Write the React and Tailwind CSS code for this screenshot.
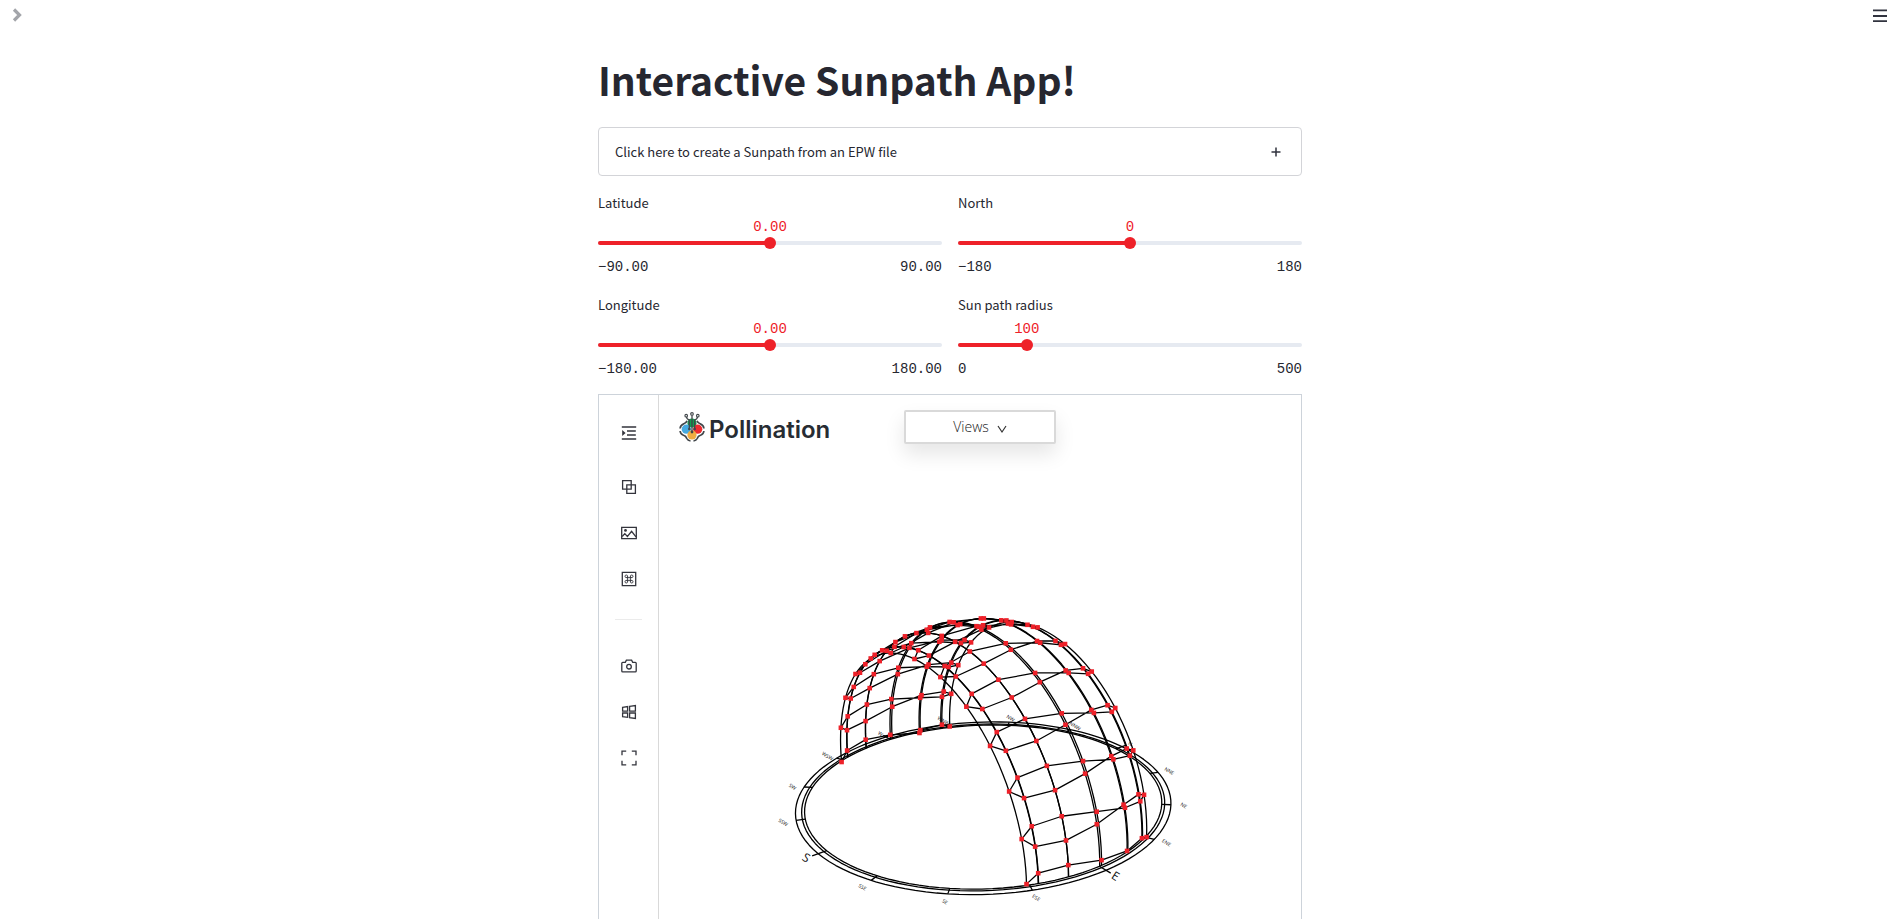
import React, { useState } from "react";

const RAD = Math.PI / 180;

// Solar declination (degrees) and equation of time (minutes) on the 21st of each month.
const MONTHS = [
  [-20.0, -11.2], [-10.7, -13.7], [0.1, -7.3], [11.8, 1.3], [20.1, 3.4], [23.4, -1.8],
  [20.5, -6.4], [12.2, -3.1], [0.8, 6.9], [-10.7, 15.4], [-19.9, 14.1], [-23.4, 1.9],
];
const HOURS = [7, 8, 9, 10, 11, 12, 13, 14, 15, 16, 17];
const CALENDAR = [0, 1, 2, 3, 4, 5, 6, 7, 8, 9, 10, 11];
const SUNRISE = [11, 10, 9, 8, 3, 4, 5];
const SUNSET = [11, 0, 1, 2, 3, 7, 6, 5];

// Perspective camera, as the first eleven entries of a 3x4 projection matrix.
const CAMERA = [
  1.02962, 1.44144, -0.05174, 0.03413,
  0.58514, -0.47794, -1.59619, 0.36277,
  -0.11429, 0.08032, -0.06268,
];

function project([x, y, z]) {
  const c = CAMERA;
  const w = c[8] * x + c[9] * y + c[10] * z + 1;
  return [
    980 + (100 * (c[0] * x + c[1] * y + c[2] * z + c[3])) / w,
    760 + (100 * (c[4] * x + c[5] * y + c[6] * z + c[7])) / w,
  ];
}

function direction(declination, hourAngle) {
  const c = Math.cos(declination * RAD);
  const h = hourAngle * RAD;
  return [-c * Math.sin(h), Math.sin(declination * RAD), c * Math.cos(h)];
}

const sunAt = (month, hour) =>
  project(direction(MONTHS[month][0], (hour - 12 + MONTHS[month][1] / 60) * 15));

const onGround = (azimuth, radius) =>
  project([radius * Math.sin(azimuth * RAD), radius * Math.cos(azimuth * RAD), 0]);

const toPoints = (list) => list.map(([x, y]) => `${x.toFixed(2)},${y.toFixed(2)}`).join(" ");

const COMPASS = ["N", "NNE", "NE", "ENE", "E", "ESE", "SE", "SSE", "S", "SSW", "SW", "WSW", "W", "WNW", "NW", "NNW"];

function Sunpath() {
  const arcs = MONTHS.map(([d]) =>
    toPoints(Array.from({ length: 61 }, (_, i) => project(direction(d, -90 + i * 3))))
  );
  const loops = HOURS.map((h) => toPoints(CALENDAR.map((m) => sunAt(m, h))));
  const suns = [
    ...HOURS.flatMap((h) => CALENDAR.map((m) => sunAt(m, h))),
    ...SUNRISE.map((m) => sunAt(m, 6)),
    ...SUNSET.map((m) => sunAt(m, 18)),
  ];
  return (
    <svg viewBox="659 395 643 524" className="absolute inset-x-0 top-0 w-full" role="img" aria-label="Sunpath diagram">
      <g fill="none" stroke="#000" strokeWidth="1.3" strokeLinejoin="round">
        {[1, 1.016, 1.05].map((r) => (
          <polygon key={r} points={toPoints(Array.from({ length: 120 }, (_, i) => onGround(i * 3, r)))} />
        ))}
        {COMPASS.map((name, i) => (
          <polyline key={name} points={toPoints([onGround(i * 22.5, 1), onGround(i * 22.5, i % 4 ? 1.05 : 1.085)])} />
        ))}
        {arcs.map((p, i) => <polyline key={i} points={p} />)}
        {loops.map((p, i) => <polygon key={i} points={p} />)}
        <polyline points={toPoints(SUNRISE.map((m) => sunAt(m, 6)))} />
        <polyline points={toPoints(SUNSET.map((m) => sunAt(m, 18)))} />
      </g>
      <g fill="#ee2129">
        {suns.map(([x, y], i) => (
          <rect key={i} x={x - 2.3} y={y - 2.3} width="4.6" height="4.6" />
        ))}
      </g>
      <g fill="#111" textAnchor="middle" fontFamily="'Open Sans', sans-serif">
        {COMPASS.map((name, i) => {
          const [x, y] = onGround(i * 22.5, 1.12);
          const major = name === "S" || name === "E";
          return (
            <text key={name} transform={`translate(${x.toFixed(1)} ${y.toFixed(1)}) rotate(32)`} dy={major ? 4 : 2} fontSize={major ? 12 : 5}>
              {name}
            </text>
          );
        })}
      </g>
    </svg>
  );
}

function Slider({ id, label, min, max, initial, digits = 0 }) {
  const [value, setValue] = useState(initial);
  const pct = ((value - min) / (max - min)) * 100;
  return (
    <div>
      <label htmlFor={id} className="block h-5 text-[13px] leading-5">{label}</label>
      <div className="relative mt-1 h-5 font-['Liberation_Mono',monospace] text-sm leading-5 text-[#ee2129]">
        <output htmlFor={id} className="absolute -translate-x-1/2" style={{ left: `${pct}%` }}>{value.toFixed(digits)}</output>
      </div>
      <div className="relative flex h-3 items-center">
        <div className="h-1 w-full overflow-hidden rounded-full bg-[#e6eaf1]">
          <div className="h-full bg-[#ee2129]" style={{ width: `${pct}%` }} />
        </div>
        <input
          id={id}
          type="range"
          min={min}
          max={max}
          step={digits ? 0.01 : 1}
          value={value}
          onChange={(e) => setValue(Number(e.target.value))}
          className="absolute -inset-x-1.5 h-3 w-[calc(100%+12px)] cursor-pointer appearance-none bg-transparent outline-none [&::-webkit-slider-thumb]:size-3 [&::-webkit-slider-thumb]:appearance-none [&::-webkit-slider-thumb]:rounded-full [&::-webkit-slider-thumb]:bg-[#ee2129]"
        />
      </div>
      <div className="mt-2 flex h-5 justify-between font-['Liberation_Mono',monospace] text-sm leading-5">
        <span>{min.toFixed(digits).replace("-", "−")}</span>
        <span>{max.toFixed(digits)}</span>
      </div>
    </div>
  );
}

function Icon({ children }) {
  return (
    <svg viewBox="0 0 16 16" className="size-4" fill="none" stroke="#33343c" strokeWidth="1.3" aria-hidden="true">
      {children}
    </svg>
  );
}

function Tool({ label, children }) {
  return (
    <button type="button" aria-label={label} className="flex h-[46px] w-full shrink-0 cursor-pointer items-center justify-center">
      <Icon>{children}</Icon>
    </button>
  );
}

function Sidebar() {
  return (
    <nav aria-label="Viewer tools" className="flex w-[60px] shrink-0 flex-col items-center border-r border-[#d9d9d9] pt-[15px]">
      <Tool label="Expand panel">
        <path d="M.8 2H15.200M.8 14H15.200" />
        <path d="M6 6H14.800M6 10H14.800" />
        <path d="M1.200 5V11L4.600 8Z" fill="#33343c" stroke="none" />
      </Tool>
      <div className="mt-2 w-full">
        <Tool label="Layers">
          <path d="M1.600 1.600H10.200V10.200H1.600ZM5.800 5.800H14.400V14.400H5.800Z" />
        </Tool>
      </div>
      <Tool label="Background image">
        <path d="M.7 2.300H15.300V13.700H.7Z" />
        <path d="M1.200 11.500L3.800 8.600L6.400 11.500L10.600 6.300L15 11.800" />
        <circle cx="4.500" cy="5.400" r="1.400" fill="#33343c" stroke="none" />
      </Tool>
      <Tool label="Shortcuts">
        <path d="M1.300 1.300H14.700V14.700H1.300Z" />
        <g strokeWidth="0.900">
          <path d="M6.600 5.300V10.700M9.400 5.300V10.700M5.300 6.600H10.700M5.300 9.400H10.700" />
          <circle cx="5.300" cy="5.300" r="1.300" />
          <circle cx="10.700" cy="5.300" r="1.300" />
          <circle cx="5.300" cy="10.700" r="1.300" />
          <circle cx="10.700" cy="10.700" r="1.300" />
        </g>
      </Tool>
      <hr className="mt-[17px] mb-[23px] w-[27px] border-t border-[#ebebeb]" />
      <Tool label="Take snapshot">
        <path d="M1.700 4.300H4.300L5.400 2.100H10.600L11.700 4.300H14.300Q15.200 4.300 15.200 5.200V13Q15.200 13.900 14.300 13.900H1.700Q.8 13.900 .8 13V5.200Q.8 4.300 1.700 4.300Z" />
        <circle cx="8" cy="8.700" r="2.300" />
      </Tool>
      <Tool label="Split views">
        <path d="M1.600 3.300L6.600 2.600V7.200H1.600ZM8.600 2.300L14.400 1.500V7.200H8.600ZM1.600 9H6.600V13.300L1.600 12.700ZM8.600 9H14.400V14.500L8.600 13.600Z" />
      </Tool>
      <Tool label="Fullscreen">
        <path d="M1 5.200V1.200H5.200M10.800 1.200H15V5.200M15 10.800V14.800H10.800M5.200 14.800H1V10.800" />
      </Tool>
    </nav>
  );
}

function Logo() {
  return (
    <div className="flex items-start gap-1 text-[#272c33]">
      <svg viewBox="0 0 26 30" className="h-[30px] w-[26px]" fill="none" stroke="#41464a" aria-hidden="true">
        <circle cx="13" cy="11" r="4.600" fill="#0f9d4f" stroke="none" />
        <circle cx="7.300" cy="17.200" r="4.600" fill="#45a9e0" stroke="none" />
        <circle cx="18.700" cy="17.200" r="4.600" fill="#ee2b2f" stroke="none" />
        <circle cx="13" cy="23" r="4.600" fill="#f0ad42" stroke="none" />
        <path strokeWidth="1.700" d="M8 8.800Q7.300 11 4.800 11.800Q1.200 13.500 1.100 16.500M1.100 19Q1.500 22.300 4.500 23.300Q7 24 7.800 26.500Q8.800 28.600 11.500 29M18 8.800Q18.700 11 21.200 11.800Q24.800 13.500 24.900 16.500M24.900 19Q24.500 22.300 21.500 23.300Q19 24 18.200 26.500Q17.200 28.600 14.500 29" />
        <path strokeWidth="1.300" d="M13 3.200V19.500M7.500 4.800Q7.800 7.500 10.300 7.800V16M18.500 4.800Q18.200 7.500 15.700 7.800V16" />
        <g fill="#fff" strokeWidth="1.100">
          <circle cx="13" cy="1.900" r="1.300" />
          <circle cx="7.200" cy="3.700" r="1.300" />
          <circle cx="18.800" cy="3.700" r="1.300" />
        </g>
        <g fill="#41464a" stroke="none">
          <circle cx="10.300" cy="17" r="1.300" />
          <circle cx="15.700" cy="17" r="1.300" />
          <circle cx="13" cy="20" r="1.400" />
        </g>
      </svg>
      <span className="font-['Inter',sans-serif] text-2xl leading-9 font-semibold">Pollination</span>
    </div>
  );
}

function Viewer() {
  return (
    <section aria-label="Model viewer" className="mt-[15px] flex min-h-0 flex-1 border border-b-0 border-[#cdd3da]">
      <Sidebar />
      <div className="relative min-w-0 flex-1 overflow-hidden">
        <Sunpath />
        <div className="relative grid grid-cols-[1fr_auto_1fr] items-start px-5 pt-[15px]">
          <div className="pt-0.5"><Logo /></div>
          <button type="button" className="flex h-[34px] w-[152px] cursor-pointer items-center justify-center gap-2 rounded-xs border-2 border-[#d9d9d9] bg-white font-['Open_Sans',sans-serif] text-sm font-light text-[#222] shadow-[0_10px_20px_rgba(0,0,0,0.10)]">
            Views
            <svg viewBox="0 0 10 10" className="mt-1 size-2.5" fill="none" stroke="#333" strokeWidth="1.200" aria-hidden="true">
              <path d="M1 2L5 8L9 2" />
            </svg>
          </button>
        </div>
      </div>
    </section>
  );
}

export default function App() {
  return (
    <div className="flex h-screen flex-col overflow-hidden bg-white font-['Noto_Sans_CJK_SC',sans-serif] text-[#262730]">
      <header className="flex h-[50px] shrink-0 items-start justify-between py-2 pr-2 pl-3">
        <button type="button" aria-label="Open sidebar" className="cursor-pointer">
          <svg viewBox="0 0 10 14" className="h-3.5 w-2.5" fill="none" stroke="#a3a5aa" strokeWidth="3.200" aria-hidden="true">
            <path d="M2 1.500L7.500 7L2 12.500" />
          </svg>
        </button>
        <button type="button" aria-label="Main menu" className="cursor-pointer">
          <svg viewBox="0 0 16 16" className="size-4" fill="none" stroke="#31333f" strokeWidth="1.800" aria-hidden="true">
            <path d="M2 2.300H16M2 8H16M2 13.200H16" />
          </svg>
        </button>
      </header>
      <main className="flex min-h-0 flex-1 justify-center pl-[5px]">
        <div className="flex w-full max-w-[704px] flex-col">
          <h1 className="text-[39px] leading-[58px] font-bold">Interactive Sunpath App!</h1>
          <button type="button" aria-expanded="false" className="mt-[19px] flex h-[49px] shrink-0 cursor-pointer items-center justify-between rounded border border-[#d3d4d8] px-4 text-[13px]">
            Click here to create a Sunpath from an EPW file
            <svg viewBox="0 0 10 10" className="mr-1 size-2.5" fill="none" stroke="#31333f" strokeWidth="1.500" aria-hidden="true">
              <path d="M5 .5V9.500M.5 5H9.500" />
            </svg>
          </button>
          <div className="mt-[17px] grid grid-cols-2 gap-x-4 gap-y-[18px]">
            <Slider id="latitude" label="Latitude" min={-90} max={90} initial={0} digits={2} />
            <Slider id="north" label="North" min={-180} max={180} initial={0} />
            <Slider id="longitude" label="Longitude" min={-180} max={180} initial={0} digits={2} />
            <Slider id="radius" label="Sun path radius" min={0} max={500} initial={100} />
          </div>
          <Viewer />
        </div>
      </main>
    </div>
  );
}
